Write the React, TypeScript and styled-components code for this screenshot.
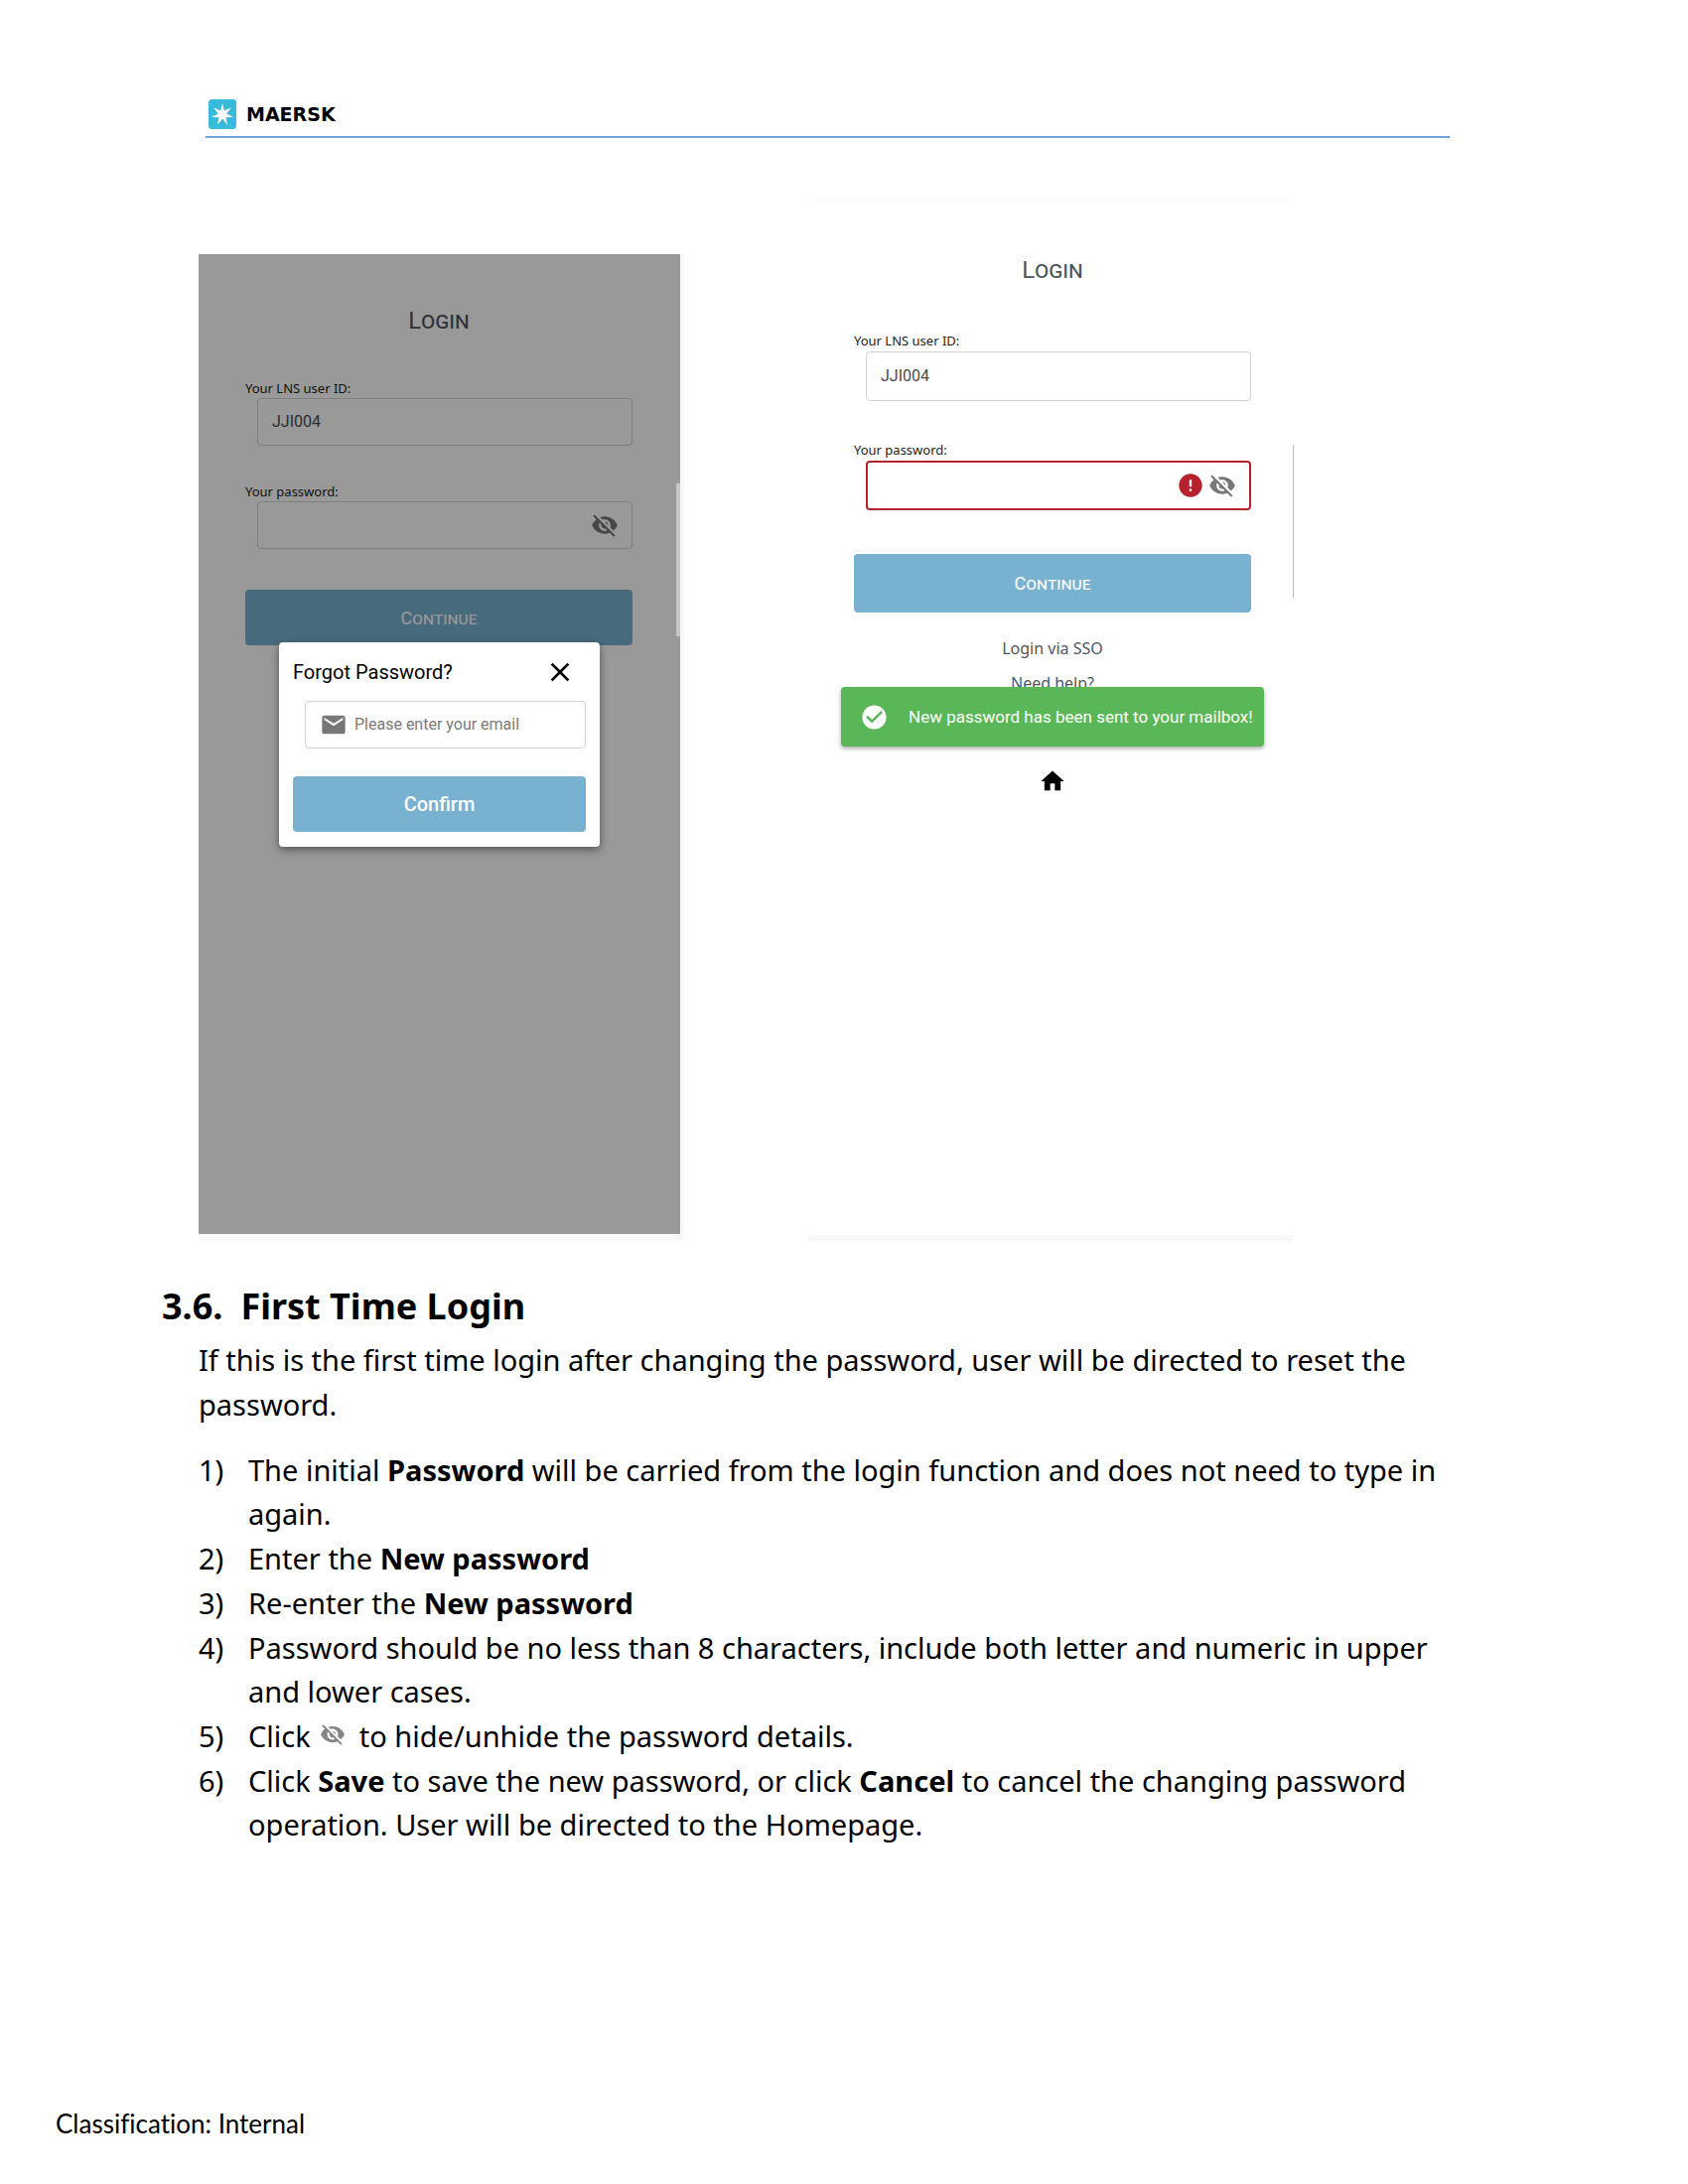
import React from "react";
import styled, { createGlobalStyle } from "styled-components";
import {
  MdCheckCircle,
  MdClose,
  MdEmail,
  MdError,
  MdHome,
  MdVisibilityOff,
} from "react-icons/md";

const textFont = `"Noto Sans", "Open Sans", sans-serif`;
const appFont = `Roboto, "Liberation Sans", sans-serif`;

const GlobalStyle = createGlobalStyle`
  *, *::before, *::after { box-sizing: border-box; }
  body { margin: 0; background: #fff; color: #000; font-family: ${textFont}; }
  h1, h2, h3, p, ol { margin: 0; padding: 0; font-weight: 400; }
  button, input { font: inherit; color: inherit; margin: 0; }
  button { border: 0; padding: 0; background: none; cursor: pointer; }
  svg { display: block; flex: none; }
`;

const Page = styled.div`
  display: flex;
  flex-direction: column;
  min-height: 100vh;
  padding: 100px 56px 45px;
`;

const Header = styled.header`
  margin: 0 184px 0 151px;
  padding: 0 3px 7px;
  border-bottom: 2px solid #6ba5d8;
`;

const Brand = styled.div`
  display: flex;
  align-items: center;
  gap: 10px;
  height: 30px;
  font: 700 19px/30px "DejaVu Sans", sans-serif;
`;

const Figures = styled.section`
  display: grid;
  grid-template-columns: minmax(0, 489px) minmax(0, 489px);
  column-gap: 125px;
  align-items: end;
  margin-left: 144px;
  padding-top: 62px;
`;

const Phone = styled.div<{ $plain?: boolean }>`
  position: relative;
  height: ${(p) => (p.$plain ? 1049 : 994)}px;
  padding: ${(p) => (p.$plain ? "54px 43px 0 46px" : "51px 48px 0 47px")};
  border-style: solid;
  border-color: #f8f8f8;
  border-width: ${(p) => (p.$plain ? "1px 0 6px" : "0 4px 7px 0")};
`;

const Shade = styled.div`
  position: absolute;
  inset: 0;
  background: rgba(0, 0, 0, 0.4);
`;

const ScrollThumb = styled.div<{ $plain?: boolean }>`
  position: absolute;
  right: 0;
  top: ${(p) => (p.$plain ? 246 : 231)}px;
  width: ${(p) => (p.$plain ? 1 : 4)}px;
  height: 154px;
  background: ${(p) => (p.$plain ? "#bdbdbd" : "#c8c8c8")};
`;

const Title = styled.h3`
  font-family: ${appFont};
  font-size: 24px;
  line-height: 32px;
  font-variant: small-caps;
  text-align: center;
  color: #4a545c;
`;

const Form = styled.form<{ $roomy?: boolean }>`
  display: flex;
  flex-direction: column;
  gap: ${(p) => (p.$roomy ? 41 : 38)}px;
  padding-top: ${(p) => (p.$roomy ? 47 : 44)}px;
`;

const Field = styled.div<{ $roomy?: boolean }>`
  display: flex;
  flex-direction: column;
  gap: ${(p) => (p.$roomy ? 3 : 2)}px;
`;

const Label = styled.label`
  font-size: 13px;
  line-height: 16px;
  color: #222;
`;

const Box = styled.div<{ $roomy?: boolean; $invalid?: boolean }>`
  display: flex;
  align-items: center;
  gap: 4px;
  height: ${(p) => (p.$roomy ? 50 : 48)}px;
  margin-left: 12px;
  padding: 0 13px 0 14px;
  border: ${(p) => (p.$invalid ? "2px solid #b5222d" : "1px solid #d2d2d2")};
  border-radius: 4px;
  background: #fff;
  color: #777;
`;

const Input = styled.input`
  flex: 1;
  min-width: 0;
  border: 0;
  padding: 0;
  outline: 0;
  background: none;
  font-family: ${appFont};
  font-size: 16px;
  line-height: 24px;
  color: #4a4a4a;
  &::placeholder {
    color: #7a7a7a;
    opacity: 1;
  }
`;

const Primary = styled.button<{ $roomy?: boolean; $caps?: boolean }>`
  width: 100%;
  height: ${(p) => (p.$roomy ? 59 : 56)}px;
  margin-top: ${(p) => (p.$caps ? 3 : 0)}px;
  border-radius: 4px;
  background: #79b1d1;
  color: #fff;
  font-family: ${appFont};
  font-size: ${(p) => (p.$caps ? 18 : 20)}px;
  font-weight: ${(p) => (p.$caps ? 400 : 500)};
  font-variant: ${(p) => (p.$caps ? "small-caps" : "normal")};
`;

const Links = styled.nav`
  display: flex;
  flex-direction: column;
  align-items: center;
  gap: 11px;
  padding-top: 24px;
  font-size: 16px;
  line-height: 24px;
`;

const TextLink = styled.a`
  color: #4d5660;
  text-decoration: none;
`;

const HomeLink = styled.a`
  display: flex;
  justify-content: center;
  margin-top: 73px;
  color: #000;
`;

const Dialog = styled.div`
  position: absolute;
  top: 391px;
  left: 81px;
  right: 81px;
  padding: 14px 14px 15px;
  border-radius: 4px;
  background: #fff;
  box-shadow: 0 3px 8px rgba(0, 0, 0, 0.45);
  font-family: ${appFont};
`;

const DialogHead = styled.div`
  display: flex;
  align-items: center;
  justify-content: space-between;
  padding-right: 10px;
  margin-bottom: 13px;
  font-size: 20px;
  line-height: 32px;
`;

const EmailBox = styled(Box)`
  gap: 7px;
  margin-bottom: 28px;
`;

const Toast = styled.div`
  position: absolute;
  top: 490px;
  left: 33px;
  right: 30px;
  display: flex;
  align-items: center;
  gap: 20px;
  height: 60px;
  padding: 0 19px;
  border-radius: 4px;
  background: #5ab758;
  box-shadow: 0 2px 4px rgba(0, 0, 0, 0.35);
  color: #fff;
  font-family: ${appFont};
  font-size: 17px;
  white-space: nowrap;
`;

const Chapter = styled.section`
  margin: 42px 164px 0 144px;
  font-size: 29px;
  line-height: 45px;
`;

const Heading = styled.h2`
  display: flex;
  gap: 18px;
  margin: 0 0 7px -37px;
  font-size: 36px;
  font-weight: 700;
  line-height: 48px;
`;

const Steps = styled.ol`
  display: flex;
  flex-direction: column;
  gap: 1px;
  margin-top: 22px;
  line-height: 44px;
  list-style: none;
`;

const Step = styled.li`
  display: grid;
  grid-template-columns: 50px 1fr;
`;

const InlineIcon = styled.span`
  display: inline-block;
  padding: 0 6px 0 2px;
  color: #858585;
`;

const Footer = styled.footer`
  margin-top: auto;
  font-family: Lato, sans-serif;
  font-size: 26px;
  font-variant-ligatures: none;
  line-height: 32px;
`;

const starPoints = Array.from({ length: 14 }, (_, i) => {
  const r = i % 2 ? 4.4 : 11.5;
  const a = (Math.PI * i) / 7 - Math.PI / 2;
  return `${(14 + r * Math.cos(a)).toFixed(2)},${(15.4 + r * Math.sin(a)).toFixed(2)}`;
}).join(" ");

const Logo = () => (
  <svg width="28" height="30" viewBox="0 0 28 30" aria-hidden="true">
    <rect width="28" height="30" rx="3.5" fill="#38badb" />
    <polygon points={starPoints} fill="#fff" />
  </svg>
);

const EyeButton = () => (
  <button type="button" aria-label="Show password">
    <MdVisibilityOff size={28} />
  </button>
);

function LoginForm({ id, roomy, invalid }: { id: string; roomy?: boolean; invalid?: boolean }) {
  return (
    <>
      <Title>Login</Title>
      <Form $roomy={roomy}>
        <Field $roomy={roomy}>
          <Label htmlFor={`${id}-user`}>Your LNS user ID:</Label>
          <Box $roomy={roomy}>
            <Input id={`${id}-user`} defaultValue="JJI004" />
          </Box>
        </Field>
        <Field $roomy={roomy}>
          <Label htmlFor={`${id}-password`}>Your password:</Label>
          <Box $roomy={roomy} $invalid={invalid}>
            <Input id={`${id}-password`} type="password" />
            {invalid && <MdError size={28} color="#b5222d" />}
            <EyeButton />
          </Box>
        </Field>
        <Primary type="button" $roomy={roomy} $caps>
          Continue
        </Primary>
      </Form>
    </>
  );
}

const steps: React.ReactNode[] = [
  <>
    The initial <b>Password</b> will be carried from the login function and does not need to type in
    <br />
    again.
  </>,
  <>
    Enter the <b>New password</b>
  </>,
  <>
    Re-enter the <b>New password</b>
  </>,
  <>
    Password should be no less than 8 characters, include both letter and numeric in upper
    <br />
    and lower cases.
  </>,
  <>
    Click{" "}
    <InlineIcon>
      <MdVisibilityOff size={26} />
    </InlineIcon>{" "}
    to hide/unhide the password details.
  </>,
  <>
    Click <b>Save</b> to save the new password, or click <b>Cancel</b> to cancel the changing password
    <br />
    operation. User will be directed to the Homepage.
  </>,
];

export default function App() {
  return (
    <Page>
      <GlobalStyle />
      <Header>
        <Brand>
          <Logo />
          MAERSK
        </Brand>
      </Header>
      <main>
        <Figures>
          <Phone>
            <LoginForm id="forgot" />
            <Shade />
            <ScrollThumb />
            <Dialog role="dialog" aria-labelledby="forgot-title">
              <DialogHead>
                <span id="forgot-title">Forgot Password?</span>
                <button type="button" aria-label="Close">
                  <MdClose size={32} />
                </button>
              </DialogHead>
              <EmailBox>
                <MdEmail size={28} />
                <Input type="email" aria-label="Email" placeholder="Please enter your email" />
              </EmailBox>
              <Primary type="button">Confirm</Primary>
            </Dialog>
          </Phone>
          <Phone $plain>
            <LoginForm id="sent" roomy invalid />
            <Links>
              <TextLink href="#sso">Login via SSO</TextLink>
              <TextLink href="#help">Need help?</TextLink>
            </Links>
            <HomeLink href="#home" aria-label="Home">
              <MdHome size={28} />
            </HomeLink>
            <ScrollThumb $plain />
            <Toast role="status">
              <MdCheckCircle size={29} />
              New password has been sent to your mailbox!
            </Toast>
          </Phone>
        </Figures>
        <Chapter>
          <Heading>
            <span>3.6.</span>
            <span>First Time Login</span>
          </Heading>
          <p>
            If this is the first time login after changing the password, user will be directed to reset the
            <br />
            password.
          </p>
          <Steps>
            {steps.map((step, i) => (
              <Step key={i}>
                <span>{i + 1})</span>
                <span>{step}</span>
              </Step>
            ))}
          </Steps>
        </Chapter>
      </main>
      <Footer>Classification: Internal</Footer>
    </Page>
  );
}
